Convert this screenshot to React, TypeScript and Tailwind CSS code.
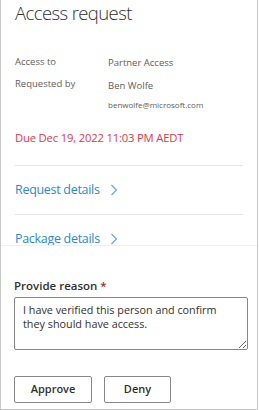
const font = { fontFamily: '"Open Sans", "Noto Sans", sans-serif' }

function Chevron() {
  return (
    <svg width="8" height="12" viewBox="0 0 8 12" fill="none" className="text-[#5ea6e4]">
      <polyline points="1.5,1 6.5,6 1.5,11" stroke="currentColor" strokeWidth="1.1" />
    </svg>
  )
}

export default function App() {
  return (
    <div
      style={font}
      className="flex h-[410px] w-[258px] flex-col overflow-hidden border-x border-b border-[#c8c8c8] bg-white text-[#323130]"
    >
      <div className="h-[245px] shrink-0 overflow-hidden px-[14px]">
        <h1 className="pt-[1px] text-[18.5px] leading-[24px] font-light tracking-[-0.6px] text-[#323130]">
          Access request
        </h1>

        <div className="mt-[26px] grid grid-cols-[93px_1fr] text-[9.5px] text-[#605e5c]">
          <div className="h-[22px] leading-[22px]">Access to</div>
          <div className="h-[22px] leading-[24px]">Partner Access</div>
          <div className="leading-[22px]">Requested by</div>
          <div>
            <div className="leading-[26px]">Ben Wolfe</div>
            <div className="text-[8px] leading-[12px]">benwolfe@microsoft.com</div>
          </div>
        </div>

        <div className="mt-[19px] text-[11.3px] leading-[16px] tracking-[-0.2px] text-[#e8374a]">
          Due Dec 19, 2022 11:03 PM AEDT
        </div>

        <div className="mt-[19px] border-t border-[#e5e5e5]" />
        <div className="flex h-[48px] items-center gap-[10px] text-[12.5px] tracking-[-0.3px] text-[#2b88d8]">
          Request details
          <Chevron />
        </div>
        <div className="border-t border-[#e5e5e5]" />
        <div className="flex h-[48px] items-center gap-[10px] text-[12.5px] tracking-[-0.3px] text-[#2b88d8]">
          Package details
          <Chevron />
        </div>
      </div>

      <div className="flex-1 border-t border-[#f0f0f0] px-[13px]">
        <div className="mt-[32px] text-[11.5px] leading-[16px] font-semibold text-[#323130]">
          Provide reason <span className="text-[#a4262c]">*</span>
        </div>
        <textarea
          className="mt-[3px] block h-[53px] w-[234px] rounded-[2px] border border-[#8a8886] py-[5px] pr-[28px] pl-[8px] text-[10.8px] leading-[14px] text-[#323130]"
          defaultValue="I have verified this person and confirm they should have access."
        />
        <div className="mt-[26px] flex gap-[12px]">
          <button className="h-[27px] w-[78px] rounded-[2px] border border-[#8a8886] text-[11px] font-semibold text-[#323130]">
            Approve
          </button>
          <button className="h-[27px] w-[67px] rounded-[2px] border border-[#8a8886] text-[11px] font-semibold text-[#323130]">
            Deny
          </button>
        </div>
      </div>
    </div>
  )
}
